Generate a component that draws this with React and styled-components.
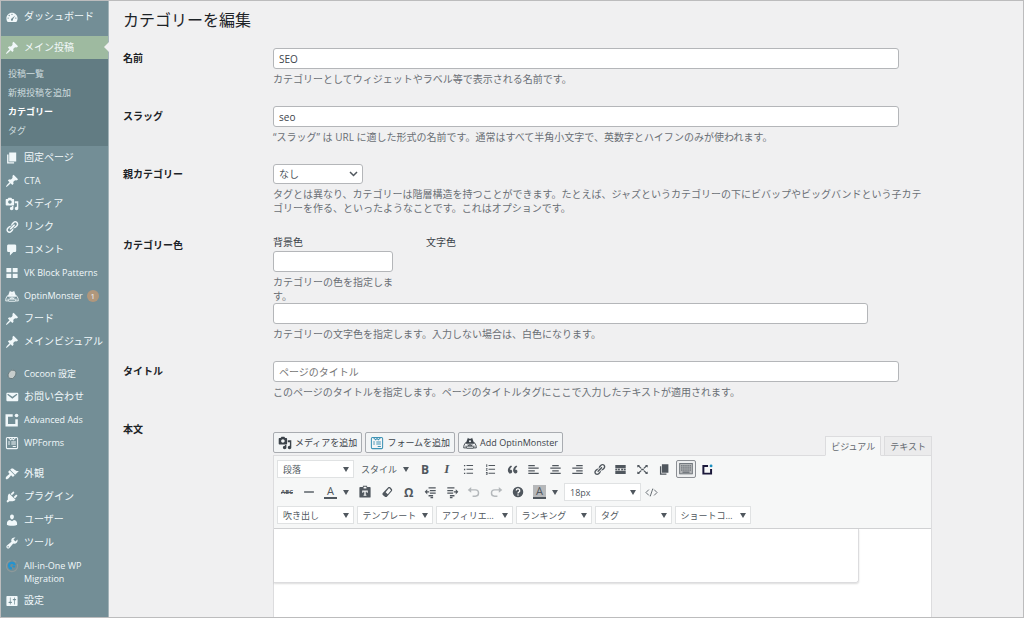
import React, { useState } from 'react';
import styled, { createGlobalStyle } from 'styled-components';

const GlobalStyle = createGlobalStyle`
  *, *::before, *::after {
    box-sizing: border-box;
  }

  body {
    margin: 0;
    background: #f0f0f1;
    color: #3c434a;
    font-family: "Open Sans", "Noto Sans CJK JP", sans-serif;
    font-size: 10px;
    line-height: 14px;
  }

  button, input, select {
    margin: 0;
    font-family: inherit;
    color: inherit;
  }

  p {
    margin: 0;
  }
`;

const PATHS = {
  dashboard: 'M3.76 17h12.48A7.96 7.96 0 0 0 18 12c0-4.42-3.58-8-8-8s-8 3.58-8 8c0 1.89.66 3.63 1.76 5zM10 5.2a1 1 0 1 1 0 2 1 1 0 0 1 0-2zM6 6.8a1 1 0 1 1 0 2 1 1 0 0 1 0-2zM14.6 8l-3.2 5.3c.3 1.2-.4 2.2-1.4 2.2a1.7 1.7 0 0 1-.6-3.2zM4.5 10.6a1 1 0 1 1 0 2 1 1 0 0 1 0-2zM15.5 10.6a1 1 0 1 1 0 2 1 1 0 0 1 0-2z',
  pin: 'M10.44 3.02l1.82-1.82 6.36 6.35-1.83 1.82c-1.05-.68-2.48-.57-3.41.36l-.75.75c-.92.93-1.04 2.35-.35 3.41l-1.83 1.82-2.41-2.41-2.8 2.79c-.42.42-3.38 2.71-3.8 2.29s1.86-3.39 2.28-3.81l2.79-2.79L4.1 9.36l1.83-1.82c1.05.69 2.48.57 3.4-.36l.75-.75c.93-.92 1.05-2.35.36-3.41z',
  page: 'M6 15V2h10v13H6zM5 16h8v2H3V5h2v11z',
  media: 'M13 11V4c0-.55-.45-1-1-1h-1.67L9 1H5L3.67 3H2c-.55 0-1 .45-1 1v7c0 .55.45 1 1 1h10c.55 0 1-.45 1-1zM7 4.5c1.38 0 2.5 1.12 2.5 2.5S8.38 9.5 7 9.5 4.5 8.38 4.5 7 5.62 4.5 7 4.5zM14 6h5v10.5c0 1.38-1.12 2.5-2.5 2.5S14 17.88 14 16.5s1.12-2.5 2.5-2.5c.17 0 .34.02.5.05V9h-3V6zm-4 8.05V13h2v3.5c0 1.38-1.12 2.5-2.5 2.5S7 17.88 7 16.5 8.12 14 9.5 14c.17 0 .34.02.5.05z',
  link: 'M17.74 2.76c1.68 1.69 1.68 4.41 0 6.1l-1.53 1.52c-1.12 1.12-2.7 1.47-4.14 1.09l2.62-2.61.76-.77.76-.76c.84-.84.84-2.2 0-3.04-.84-.85-2.2-.85-3.04 0l-.77.76-3.38 3.38c-.37-1.44-.02-3.02 1.1-4.14l1.52-1.53c1.69-1.68 4.42-1.68 6.1 0zM8.59 13.43l5.34-5.34c.42-.42.42-1.1 0-1.52-.44-.43-1.13-.39-1.53 0l-5.33 5.34c-.42.42-.42 1.1 0 1.52.44.43 1.13.39 1.52 0zm-.76 2.29l4.14-4.15c.38 1.44.03 3.02-1.09 4.14l-1.52 1.53c-1.69 1.68-4.41 1.68-6.1 0-1.68-1.68-1.68-4.42 0-6.1l1.53-1.52c1.12-1.12 2.7-1.47 4.14-1.1l-4.14 4.15c-.85.84-.85 2.2 0 3.05.84.84 2.2.84 3.04 0z',
  comment: 'M5 2h9c1.1 0 2 .9 2 2v7c0 1.1-.9 2-2 2h-2l-5 5v-5H5c-1.1 0-2-.9-2-2V4c0-1.1.9-2 2-2z',
  blocks: 'M2 3h7v6H2zM11 3h7v6h-7zM2 11h7v6H2zM11 11h7v6h-7z',
  mail: 'M3.87 4h13.25C18.37 4 19 4.59 19 5.79v8.42c0 1.19-.63 1.79-1.88 1.79H3.87c-1.25 0-1.88-.6-1.88-1.79V5.79c0-1.2.63-1.79 1.88-1.79zm6.62 8.6l6.74-5.53c.24-.2.43-.66.13-1.07-.29-.41-.82-.42-1.17-.17l-5.7 3.86L4.8 5.83c-.35-.25-.88-.24-1.17.17-.3.41-.11.87.13 1.07z',
  brush: 'M14.48 11.06L7.41 3.99l1.5-1.5c.5-.56 2.3-.47 3.51.32 1.21.8 1.43 1.28 2.91 2.1 1.18.64 2.45 1.26 4.45.85zm-.71.71L6.7 4.7 4.93 6.47c-.39.39-.39 1.02 0 1.41l1.06 1.06c.39.39.39 1.03 0 1.42-.6.6-1.43 1.11-2.21 1.69-.35.26-.7.53-1.01.84C1.43 14.23.4 16.08 1.4 17.07c.99 1 2.84-.03 4.18-1.36.31-.31.58-.66.85-1.02.57-.78 1.08-1.61 1.69-2.21.39-.39 1.02-.39 1.41 0l1.06 1.06c.39.39 1.02.39 1.41 0z',
  plug: 'M13.11 4.36L9.87 7.6 8 5.73l3.24-3.24c.35-.34 1.05-.2 1.56.32.52.51.66 1.21.31 1.55zm-8 1.77l.91-1.12 9.01 9.01-1.19.84c-.71.71-2.63 1.16-3.82 1.16H6.14L4.9 17.26c-.59.59-1.54.59-2.12 0-.59-.58-.59-1.53 0-2.12l1.24-1.24v-3.88c0-1.13.4-3.19 1.09-3.89zm7.26 3.97l3.24-3.24c.34-.35 1.04-.21 1.55.31.52.51.66 1.21.31 1.55l-3.24 3.25z',
  user: 'M10 9.25c-2.27 0-2.73-3.44-2.73-3.44C7 4.02 7.82 2 9.97 2c2.16 0 2.98 2.02 2.71 3.81 0 0-.41 3.44-2.68 3.44zm0 2.57L12.72 10c2.39 0 4.52 2.33 4.52 4.53v2.49s-3.65 1.13-7.24 1.13c-3.65 0-7.24-1.13-7.24-1.13v-2.49c0-2.25 1.94-4.48 4.47-4.48z',
  wrench: 'M16.68 9.77c-1.34 1.34-3.3 1.67-4.95.99l-5.41 6.52c-.99.99-2.59.99-3.58 0s-.99-2.59 0-3.57l6.52-5.42c-.68-1.65-.35-3.61.99-4.95 1.28-1.28 3.12-1.62 4.72-1.06l-2.89 2.89 2.82 2.82 2.86-2.87c.53 1.58.18 3.39-1.08 4.65zM3.81 16.21c.4.39 1.04.39 1.43 0 .4-.4.4-1.04 0-1.43-.39-.4-1.03-.4-1.43 0-.39.39-.39 1.03 0 1.43z',
  settings: 'M18 16V4c0-.55-.45-1-1-1H3c-.55 0-1 .45-1 1v12c0 .55.45 1 1 1h14c.55 0 1-.45 1-1zM8 11h1c.55 0 1 .45 1 1s-.45 1-1 1H8v1.5c0 .28-.22.5-.5.5s-.5-.22-.5-.5V13H6c-.55 0-1-.45-1-1s.45-1 1-1h1V5.5c0-.28.22-.5.5-.5s.5.22.5.5V11zm5-2h-1c-.55 0-1-.45-1-1s.45-1 1-1h1V5.5c0-.28.22-.5.5-.5s.5.22.5.5V7h1c.55 0 1 .45 1 1s-.45 1-1 1h-1v5.5c0 .28-.22.5-.5.5s-.5-.22-.5-.5V9z',
  ul: 'M3 3h2v2H3zM7 3h10v1.5H7zM3 9h2v2H3zM7 9h10v1.5H7zM3 15h2v2H3zM7 15h10v1.5H7z',
  ol: 'M3.500 2H5v4H3.500zM7 3h10v1.500H7zM3 8h2.500v1.400l-1.300 1.400h1.300V12H3v-1.200l1.200-1.600H3zM7 9h10v1.500H7zM3 14h2.500v4H3v-1h1.400v-.8H3zM7 15h10v1.500H7z',
  quote: 'M9.49 13.22c0-.74-.2-1.38-.61-1.9-.62-.78-1.83-.88-2.53-.72-.29-1.65 1.11-3.75 2.92-4.65L7.88 4c-2.73 1.3-5.42 4.28-4.96 8.05C3.21 14.43 4.59 16 6.54 16c.85 0 1.56-.25 2.12-.75s.83-1.18.83-2.03zm8.05 0c0-.74-.2-1.38-.61-1.9-.63-.78-1.83-.88-2.53-.72-.29-1.65 1.11-3.75 2.92-4.65L15.93 4c-2.73 1.3-5.41 4.28-4.95 8.05.29 2.38 1.66 3.95 3.61 3.95.85 0 1.56-.25 2.12-.75s.83-1.18.83-2.03z',
  left: 'M2 3h10v2H2zM2 7h16v2H2zM2 11h10v2H2zM2 15h16v2H2z',
  center: 'M5 3h10v2H5zM2 7h16v2H2zM5 11h10v2H5zM2 15h16v2H2z',
  right: 'M8 3h10v2H8zM2 7h16v2H2zM8 11h10v2H8zM2 15h16v2H2z',
  more: 'M2 3h16v5H2zM2 9h3v2H2zM6 9h3v2H6zM11 9h3v2h-3zM15 9h3v2h-3zM2 12h16v5H2z',
  fullscreen: 'M2 3h4L5 4.4l3.600 3.200-1.200 1.300L3.700 5.600 2 7zM18 3v4l-1.700-1.400-3.700 3.300-1.200-1.300L15 4.400 14 3zM2 17v-4l1.700 1.400 3.700-3.300 1.200 1.300L5 15.600 6 17zM18 17h-4l1-1.400-3.600-3.200 1.200-1.300 3.700 3.300L18 13zM8 9h4v2H8z',
  hr: 'M3 9h14v2H3z',
  paste: 'M7 1h6v2h4c.6 0 1 .4 1 1v13c0 .6-.4 1-1 1H3c-.6 0-1-.4-1-1V4c0-.6.4-1 1-1h4zM8 2.500h4V5H8zM6 8v3h1.500v-1.200H9V14H8v1.500h4V14h-1V9.800h1.500V11H14V8z',
  eraser: 'M12.500 1.500h2.500l3.500 4V8l-9 10.500H7l-4.500-4V12zM13.500 3.500L7.700 10.500l3.600 3.300 5.500-6.800z',
  outdent: 'M7 2h11v2H7zM9 6h9v2H9zM9 10h9v2H9zM7 14h7v2H7zM10 17h4v2h-4zM1 9l4-4v3h3v2H5v3z',
  indent: 'M2 2h11v2H2zM2 6h9v2H2zM2 10h9v2H2zM6 14h7v2H6zM6 17h4v2H6zM19 9l-4 4v-3h-3V8h3V5z',
  undo: 'M6 3v3h6a5 5 0 0 1 0 11H8v-2h4a3 3 0 0 0 0-7H6v3L1 7z',
  redo: 'M14 3v3H8a5 5 0 0 0 0 11h4v-2H8a3 3 0 0 1 0-7h6v3l5-4z',
};

const Icon = ({ name, size = 14 }) => (
  <svg width={size} height={size} viewBox="0 0 20 20" fill="currentColor" fillRule="evenodd" aria-hidden="true">
    <path d={PATHS[name]} />
  </svg>
);

const MonsterIcon = () => (
  <svg width="14" height="14" viewBox="0 0 20 20" fill="none" stroke="currentColor" strokeWidth="1.3" aria-hidden="true">
    <path d="M5 8l2-5.500L8.500 4h3L13 2.500 15 8l1.500 3h-13z" fill="currentColor" stroke="none" />
    <circle cx="10" cy="7.500" r="1.600" fill="#e8eef0" stroke="none" />
    <path d="M4 9l-2.500 4L1 17h4l-1-3M16 9l2.500 4 .5 4h-4l1-3M5 14.500h10M5 17.500h10M7 12l1 2 1-2 1 2 1-2 1 2 1-2" />
  </svg>
);

const CocoonIcon = () => (
  <svg width="14" height="14" viewBox="0 0 20 20" aria-hidden="true">
    <ellipse cx="10" cy="10.5" rx="5" ry="6.5" transform="rotate(28 10 10.5)" fill="#c6cdcc" stroke="#66777b" strokeWidth="1.2" />
  </svg>
);

const AdsIcon = ({ dot = 'currentColor', size = 14 }) => (
  <svg width={size} height={size} viewBox="0 0 20 20" aria-hidden="true">
    <path d="M11 3.500H2.500v14h14V9" fill="none" stroke="currentColor" strokeWidth="3.6" />
    <circle cx="16.5" cy="3.5" r="2.6" fill={dot} />
  </svg>
);

const FormIcon = () => (
  <svg width="14" height="14" viewBox="0 0 20 20" fill="none" stroke="currentColor" strokeWidth="1.5" aria-hidden="true">
    <rect x="2" y="2" width="16" height="16" rx="1.5" />
    <path d="M5 2.500l3 3 2-2 2 2 3-3M4.500 8.500H7M9 8.500h6.500M4.500 11.500H7M9 11.500h6.500M11 15h4.500" />
  </svg>
);

const MigrationIcon = () => (
  <svg width="14" height="14" viewBox="0 0 20 20" fill="none" aria-hidden="true">
    <path d="M8 2.200A8 8 0 1 0 17.500 7" stroke="#8d9899" strokeWidth="1.6" />
    <path d="M12 2.300a8 8 0 0 1 4 2.400" stroke="#8d9899" strokeWidth="1.6" />
    <path d="M10 13.500a4 4 0 1 1 3.800-4.600" stroke="#2493cf" strokeWidth="3.2" />
    <path d="M9.500 9.500h5.500l-2 3.500z" fill="#2493cf" />
  </svg>
);

const KeyboardIcon = () => (
  <svg width="14" height="14" viewBox="0 0 20 20" fill="none" stroke="currentColor" aria-hidden="true">
    <rect x="1" y="2" width="18" height="15" fill="#b4b6b8" strokeWidth="1" />
    <path d="M3 5.500h14M3 8.500h14M3 11.500h14" strokeWidth="1.4" strokeDasharray="2 1" />
    <path d="M5 14.500h10" strokeWidth="1.4" />
  </svg>
);

const HelpIcon = () => (
  <svg width="14" height="14" viewBox="0 0 20 20" aria-hidden="true">
    <circle cx="10" cy="10" r="7.5" fill="currentColor" />
    <path d="M7.500 8a2.500 2.500 0 1 1 3.700 2.200c-.9.500-1.200.8-1.200 1.800" fill="none" stroke="#fff" strokeWidth="1.8" />
    <circle cx="10" cy="14.4" r="1.1" fill="#fff" />
  </svg>
);

const CodeIcon = () => (
  <svg width="13" height="13" viewBox="0 0 20 20" fill="none" stroke="currentColor" strokeWidth="1.3" aria-hidden="true">
    <path d="M6 5.500L1.500 10 6 14.500M14 5.500l4.500 4.500-4.500 4.500M12 4L8 16" />
  </svg>
);

const Caret = () => (
  <svg width="6" height="5" viewBox="0 0 6 5" fill="currentColor" aria-hidden="true">
    <path d="M0 0h6L3 5z" />
  </svg>
);

const Chevron = () => (
  <svg width="9" height="6" viewBox="0 0 9 6" fill="none" stroke="currentColor" strokeWidth="1.5" aria-hidden="true">
    <path d="M1 1l3.500 3.500L8 1" />
  </svg>
);

const Page = styled.div`
  display: grid;
  grid-template-columns: 108px minmax(0, 1fr);
  min-height: 100vh;
  border: 1px solid #bcbcbd;
`;

const Sidebar = styled.nav`
  padding-top: 4px;
  background: #738e96;
  border-right: 1px solid #a3b3b8;
  color: #f1f8fa;
`;

const Menu = styled.ul`
  margin: 0;
  padding: 0;
  list-style: none;
`;

const MenuItem = styled.li`
  margin-top: ${({ $gap }) => $gap || 0}px;
`;

const MenuLink = styled.a`
  position: relative;
  display: flex;
  gap: 5px;
  min-height: 23px;
  padding: 5px 4px 4px;
  line-height: 13px;
  color: inherit;
  font-size: ${({ $latin }) => ($latin ? 9 : 10)}px;
  text-decoration: none;
  background: ${({ $active }) => ($active ? '#9ebaa0' : 'transparent')};

  svg {
    flex: none;
  }

  &::after {
    content: "";
    display: ${({ $active }) => ($active ? 'block' : 'none')};
    position: absolute;
    top: 6px;
    right: -1px;
    border: 5px solid transparent;
    border-left-width: 0;
    border-right-color: #f0f0f1;
  }
`;

const Badge = styled.span`
  display: inline-block;
  width: 12px;
  height: 12px;
  margin-left: 4px;
  border-radius: 6px;
  background: #b0977c;
  font-size: 8px;
  line-height: 12px;
  text-align: center;
`;

const SubMenu = styled(Menu)`
  padding: 5px 7px 6px;
  background: #627c83;
  font-size: 9px;
`;

const SubLink = styled.a`
  display: block;
  line-height: 19px;
  color: ${({ $current }) => ($current ? '#fff' : '#cfdcdf')};
  font-weight: ${({ $current }) => ($current ? 600 : 400)};
  text-decoration: none;
`;

const Main = styled.main`
  display: flex;
  flex-direction: column;
  padding: 9px 91px 0 14px;
`;

const Title = styled.h1`
  margin: 0 0 18px;
  color: #1d2327;
  font-size: 16px;
  font-weight: 400;
  line-height: 20px;
`;

const Form = styled.form`
  flex: 1;
  display: flex;
  flex-direction: column;
  gap: 20px;
`;

const Row = styled.div`
  display: grid;
  grid-template-columns: 150px minmax(0, 1fr);
  flex: ${({ $grow }) => ($grow ? 1 : 'none')};
`;

const RowLabel = styled.label`
  color: #1d2327;
  font-weight: 600;
  line-height: 21px;
`;

const TextInput = styled.input`
  display: block;
  width: ${({ $full }) => ($full ? '100%' : '95%')};
  height: 21px;
  padding: 0 5px;
  border: 1px solid #b4b6b9;
  border-radius: 3px;
  background: #fff;
  color: #3c434a;
  font-size: 10px;

  &::placeholder {
    color: #757575;
  }
`;

const Description = styled.p`
  max-width: 654px;
  margin-top: 3px;
  color: #6a6f75;
`;

const SelectBox = styled.span`
  display: inline-grid;
  grid-template-columns: minmax(0, 1fr);
  align-items: center;
  width: ${({ $width }) => $width || '100%'};
  color: #50575e;

  select, svg {
    grid-area: 1 / 1;
  }

  svg {
    justify-self: end;
    margin-right: 5px;
    pointer-events: none;
  }
`;

const ParentSelect = styled.select`
  width: 100%;
  height: 20px;
  padding: 0 5px;
  appearance: none;
  border: 1px solid #b4b6b9;
  border-radius: 3px;
  background: #fff;
  font-size: 10px;
`;

const ToolSelect = styled.select`
  width: 100%;
  height: 18px;
  padding: 0 13px 0 5px;
  appearance: none;
  border: 1px solid #e0e2e3;
  border-radius: 0;
  background: #fff;
  font-size: 9px;
  text-overflow: ellipsis;
`;

const Narrow = styled.div`
  width: 95%;
`;

const Colors = styled.div`
  display: flex;
  gap: 33px;
`;

const ColorField = styled.div`
  width: 120px;
`;

const ColorLabel = styled.label`
  display: block;
  margin-bottom: 2px;
`;

const Editor = styled.div`
  display: flex;
  flex-direction: column;
  padding-top: 13px;
`;

const EditorHead = styled.div`
  display: flex;
  align-items: flex-start;
  gap: 3px;
  height: 23px;
`;

const MediaButton = styled.button`
  display: flex;
  align-items: center;
  gap: 3px;
  height: 21px;
  padding: 0 4px;
  border: 1px solid #a9acb1;
  border-radius: 2px;
  background: #f3f5f6;
  color: #3c434a;
  font-size: 9px;
  white-space: nowrap;

  svg {
    color: ${({ $tint }) => $tint || '#3c434a'};
  }
`;

const Tabs = styled.div`
  display: flex;
  align-self: flex-end;
  gap: 3px;
  margin-left: auto;
`;

const Tab = styled.button`
  height: 20px;
  margin-bottom: -1px;
  padding: 0 5px;
  border: 1px solid #dcdcde;
  border-bottom-color: ${({ $active }) => ($active ? '#f6f7f7' : '#dcdcde')};
  background: ${({ $active }) => ($active ? '#f6f7f7' : '#ebebec')};
  color: #646970;
  font-size: 9px;
  z-index: 1;
`;

const Panel = styled.div`
  flex: 1;
  display: flex;
  flex-direction: column;
  border: 1px solid #dcdcde;
  border-bottom: 0;
  background: #fff;
`;

const Toolbar = styled.div`
  display: flex;
  flex-direction: column;
  gap: 5px;
  padding: 4px 3px;
  border-bottom: 1px solid #d0d1d3;
  background: #f6f7f7;
  color: #50575e;
`;

const ToolRow = styled.div`
  display: flex;
  align-items: center;
`;

const ToolGroup = styled.div`
  display: flex;
  justify-content: space-between;
  width: ${({ $width }) => $width}px;
`;

const ToolButton = styled.button`
  display: flex;
  align-items: center;
  justify-content: center;
  width: 20px;
  height: 18px;
  padding: 0;
  border: ${({ $active }) => ($active ? '1px solid #8c8f94' : '0')};
  border-radius: 2px;
  background: ${({ $active }) => ($active ? '#eeeff0' : 'transparent')};
  color: ${({ $color }) => $color || 'inherit'};
  font-size: ${({ $size }) => $size || 12}px;
  font-weight: ${({ $bold }) => ($bold ? 700 : 400)};
`;

const Italic = styled.i`
  font-family: "Liberation Serif", serif;
  font-size: 13px;
`;

const StyleMenu = styled.button`
  display: flex;
  align-items: center;
  gap: 6px;
  width: 61px;
  height: 18px;
  padding: 0 0 0 7px;
  border: 0;
  background: transparent;
  font-size: 9px;
  white-space: nowrap;
`;

const ColorMenu = styled.button`
  display: flex;
  align-items: center;
  gap: 6px;
  width: 36px;
  height: 18px;
  padding: 0 0 0 5px;
  border: 0;
  background: transparent;
`;

const Letter = styled.span`
  width: 13px;
  height: 14px;
  border-bottom: 2px solid #50575e;
  background: ${({ $filled }) => ($filled ? '#b6b8ba' : 'transparent')};
  font-size: 11px;
  line-height: 12px;
  text-align: center;
`;

const Shortcodes = styled.div`
  display: grid;
  grid-template-columns: repeat(6, minmax(0, 1fr));
  gap: 3px;
  width: 474px;
`;

const Content = styled.div`
  width: 585px;
  height: 54px;
  border: 1px solid #dcdcde;
  border-width: 0 1px 1px 0;
  border-radius: 0 0 3px 0;
  box-shadow: 0 1px 2px rgba(0, 0, 0, 0.14);
`;

const menu = [
  { label: 'ダッシュボード', icon: <Icon name="dashboard" /> },
  {
    label: 'メイン投稿',
    icon: <Icon name="pin" />,
    gap: 8,
    active: true,
    children: ['投稿一覧', '新規投稿を追加', 'カテゴリー', 'タグ'],
  },
  { label: '固定ページ', icon: <Icon name="page" /> },
  { label: 'CTA', icon: <Icon name="pin" />, latin: true },
  { label: 'メディア', icon: <Icon name="media" /> },
  { label: 'リンク', icon: <Icon name="link" /> },
  { label: 'コメント', icon: <Icon name="comment" /> },
  { label: 'VK Block Patterns', icon: <Icon name="blocks" />, latin: true },
  { label: 'OptinMonster', icon: <MonsterIcon />, badge: 1, latin: true },
  { label: 'フード', icon: <Icon name="pin" /> },
  { label: 'メインビジュアル', icon: <Icon name="pin" /> },
  { label: 'Cocoon 設定', icon: <CocoonIcon />, gap: 9, latin: true },
  { label: 'お問い合わせ', icon: <Icon name="mail" /> },
  { label: 'Advanced Ads', icon: <AdsIcon />, latin: true },
  { label: 'WPForms', icon: <FormIcon />, latin: true },
  { label: '外観', icon: <Icon name="brush" />, gap: 8 },
  { label: 'プラグイン', icon: <Icon name="plug" /> },
  { label: 'ユーザー', icon: <Icon name="user" /> },
  { label: 'ツール', icon: <Icon name="wrench" /> },
  { label: 'All-in-One WP Migration', icon: <MigrationIcon />, latin: true },
  { label: '設定', icon: <Icon name="settings" /> },
];

const formatTools = [
  ['番号なしリスト', 'ul'],
  ['番号付きリスト', 'ol'],
  ['引用', 'quote'],
  ['左寄せ', 'left'],
  ['中央揃え', 'center'],
  ['右寄せ', 'right'],
  ['リンクの挿入', 'link'],
  ['続きを読む', 'more'],
  ['フルスクリーン', 'fullscreen'],
  ['次のページ', 'page'],
];

const shortcodes = ['吹き出し', 'テンプレート', 'アフィリエイト', 'ランキング', 'タグ', 'ショートコード'];

const ToolDropdown = ({ label, value, width }) => (
  <SelectBox $width={width}>
    <ToolSelect aria-label={label}>
      <option>{value}</option>
    </ToolSelect>
    <Caret />
  </SelectBox>
);

const App = () => {
  const [fields, setFields] = useState({ name: 'SEO', slug: 'seo', color: '', textColor: '', title: '' });
  const [mode, setMode] = useState('visual');

  const handleChange = (e) => {
    const { name, value } = e.target;
    setFields(prev => ({ ...prev, [name]: value }));
  };

  return (
    <Page>
      <GlobalStyle />
      <Sidebar aria-label="メインメニュー">
        <Menu>
          {menu.map(item => (
            <MenuItem key={item.label} $gap={item.gap}>
              <MenuLink href="#" $active={item.active} $latin={item.latin}>
                {item.icon}
                <span>
                  {item.label}
                  {item.badge && <Badge>{item.badge}</Badge>}
                </span>
              </MenuLink>
              {item.children && (
                <SubMenu>
                  {item.children.map(child => (
                    <li key={child}>
                      <SubLink href="#" $current={child === 'カテゴリー'}>{child}</SubLink>
                    </li>
                  ))}
                </SubMenu>
              )}
            </MenuItem>
          ))}
        </Menu>
      </Sidebar>

      <Main>
        <Title>カテゴリーを編集</Title>
        <Form onSubmit={(e) => e.preventDefault()}>
          <Row>
            <RowLabel htmlFor="name">名前</RowLabel>
            <div>
              <TextInput id="name" name="name" type="text" value={fields.name} onChange={handleChange} />
              <Description>カテゴリーとしてウィジェットやラベル等で表示される名前です。</Description>
            </div>
          </Row>

          <Row>
            <RowLabel htmlFor="slug">スラッグ</RowLabel>
            <div>
              <TextInput id="slug" name="slug" type="text" value={fields.slug} onChange={handleChange} />
              <Description>“スラッグ” は URL に適した形式の名前です。通常はすべて半角小文字で、英数字とハイフンのみが使われます。</Description>
            </div>
          </Row>

          <Row>
            <RowLabel htmlFor="parent">親カテゴリー</RowLabel>
            <div>
              <SelectBox $width="90px">
                <ParentSelect id="parent">
                  <option>なし</option>
                </ParentSelect>
                <Chevron />
              </SelectBox>
              <Description>
                タグとは異なり、カテゴリーは階層構造を持つことができます。たとえば、ジャズというカテゴリーの下にビバップやビッグバンドという子カテゴリーを作る、といったようなことです。これはオプションです。
              </Description>
            </div>
          </Row>

          <Row>
            <RowLabel htmlFor="color">カテゴリー色</RowLabel>
            <Narrow>
              <Colors>
                <ColorField>
                  <ColorLabel htmlFor="color">背景色</ColorLabel>
                  <TextInput $full id="color" name="color" type="text" value={fields.color} onChange={handleChange} />
                  <Description>カテゴリーの色を指定します。</Description>
                </ColorField>
                <ColorLabel htmlFor="textColor">文字色</ColorLabel>
              </Colors>
              <TextInput id="textColor" name="textColor" type="text" value={fields.textColor} onChange={handleChange} />
              <Description>カテゴリーの文字色を指定します。入力しない場合は、白色になります。</Description>
            </Narrow>
          </Row>

          <Row>
            <RowLabel htmlFor="title">タイトル</RowLabel>
            <div>
              <TextInput id="title" name="title" type="text" placeholder="ページのタイトル" value={fields.title} onChange={handleChange} />
              <Description>このページのタイトルを指定します。ページのタイトルタグにここで入力したテキストが適用されます。</Description>
            </div>
          </Row>

          <Row $grow>
            <RowLabel as="div" id="content-label">本文</RowLabel>
            <Editor>
              <EditorHead>
                <MediaButton type="button"><Icon name="media" />メディアを追加</MediaButton>
                <MediaButton type="button" $tint="#3f93b5"><FormIcon />フォームを追加</MediaButton>
                <MediaButton type="button"><MonsterIcon />Add OptinMonster</MediaButton>
                <Tabs>
                  <Tab type="button" $active={mode === 'visual'} onClick={() => setMode('visual')}>ビジュアル</Tab>
                  <Tab type="button" $active={mode === 'text'} onClick={() => setMode('text')}>テキスト</Tab>
                </Tabs>
              </EditorHead>

              <Panel>
                <Toolbar>
                  <ToolRow>
                    <ToolDropdown label="書式" value="段落" width="77px" />
                    <StyleMenu type="button">スタイル<Caret /></StyleMenu>
                    <ToolGroup $width={303}>
                      <ToolButton type="button" aria-label="太字" $bold>B</ToolButton>
                      <ToolButton type="button" aria-label="イタリック" $bold><Italic>I</Italic></ToolButton>
                      {formatTools.map(([label, name]) => (
                        <ToolButton key={name} type="button" aria-label={label}>
                          <Icon name={name} size={13} />
                        </ToolButton>
                      ))}
                      <ToolButton type="button" aria-label="ツールバー切り替え" $active><KeyboardIcon /></ToolButton>
                      <ToolButton type="button" aria-label="Advanced Ads" $color="#1b183a">
                        <AdsIcon dot="#1c8fc0" size={11} />
                      </ToolButton>
                    </ToolGroup>
                  </ToolRow>

                  <ToolRow>
                    <ToolGroup $width={42}>
                      <ToolButton type="button" aria-label="打ち消し" $size={6} $bold><s>ABC</s></ToolButton>
                      <ToolButton type="button" aria-label="横ライン"><Icon name="hr" /></ToolButton>
                    </ToolGroup>
                    <ColorMenu type="button" aria-label="テキスト色"><Letter>A</Letter><Caret /></ColorMenu>
                    <ToolGroup $width={173}>
                      <ToolButton type="button" aria-label="テキストとしてペースト"><Icon name="paste" /></ToolButton>
                      <ToolButton type="button" aria-label="書式設定をクリア"><Icon name="eraser" size={12} /></ToolButton>
                      <ToolButton type="button" aria-label="特殊文字" $bold>Ω</ToolButton>
                      <ToolButton type="button" aria-label="インデントを減らす"><Icon name="outdent" size={13} /></ToolButton>
                      <ToolButton type="button" aria-label="インデントを増やす"><Icon name="indent" size={13} /></ToolButton>
                      <ToolButton type="button" aria-label="取り消し" $color="#b4b8bb"><Icon name="undo" /></ToolButton>
                      <ToolButton type="button" aria-label="やり直し" $color="#b4b8bb"><Icon name="redo" /></ToolButton>
                      <ToolButton type="button" aria-label="キーボードショートカット"><HelpIcon /></ToolButton>
                    </ToolGroup>
                    <ColorMenu type="button" aria-label="背景色"><Letter $filled>A</Letter><Caret /></ColorMenu>
                    <ToolDropdown label="フォントサイズ" value="18px" width="77px" />
                    <ToolButton type="button" aria-label="ソースコード"><CodeIcon /></ToolButton>
                  </ToolRow>

                  <Shortcodes>
                    {shortcodes.map(code => (
                      <ToolDropdown key={code} label={code} value={code} />
                    ))}
                  </Shortcodes>
                </Toolbar>
                <Content role="textbox" contentEditable suppressContentEditableWarning aria-labelledby="content-label" />
              </Panel>
            </Editor>
          </Row>
        </Form>
      </Main>
    </Page>
  );
};

export default App;
